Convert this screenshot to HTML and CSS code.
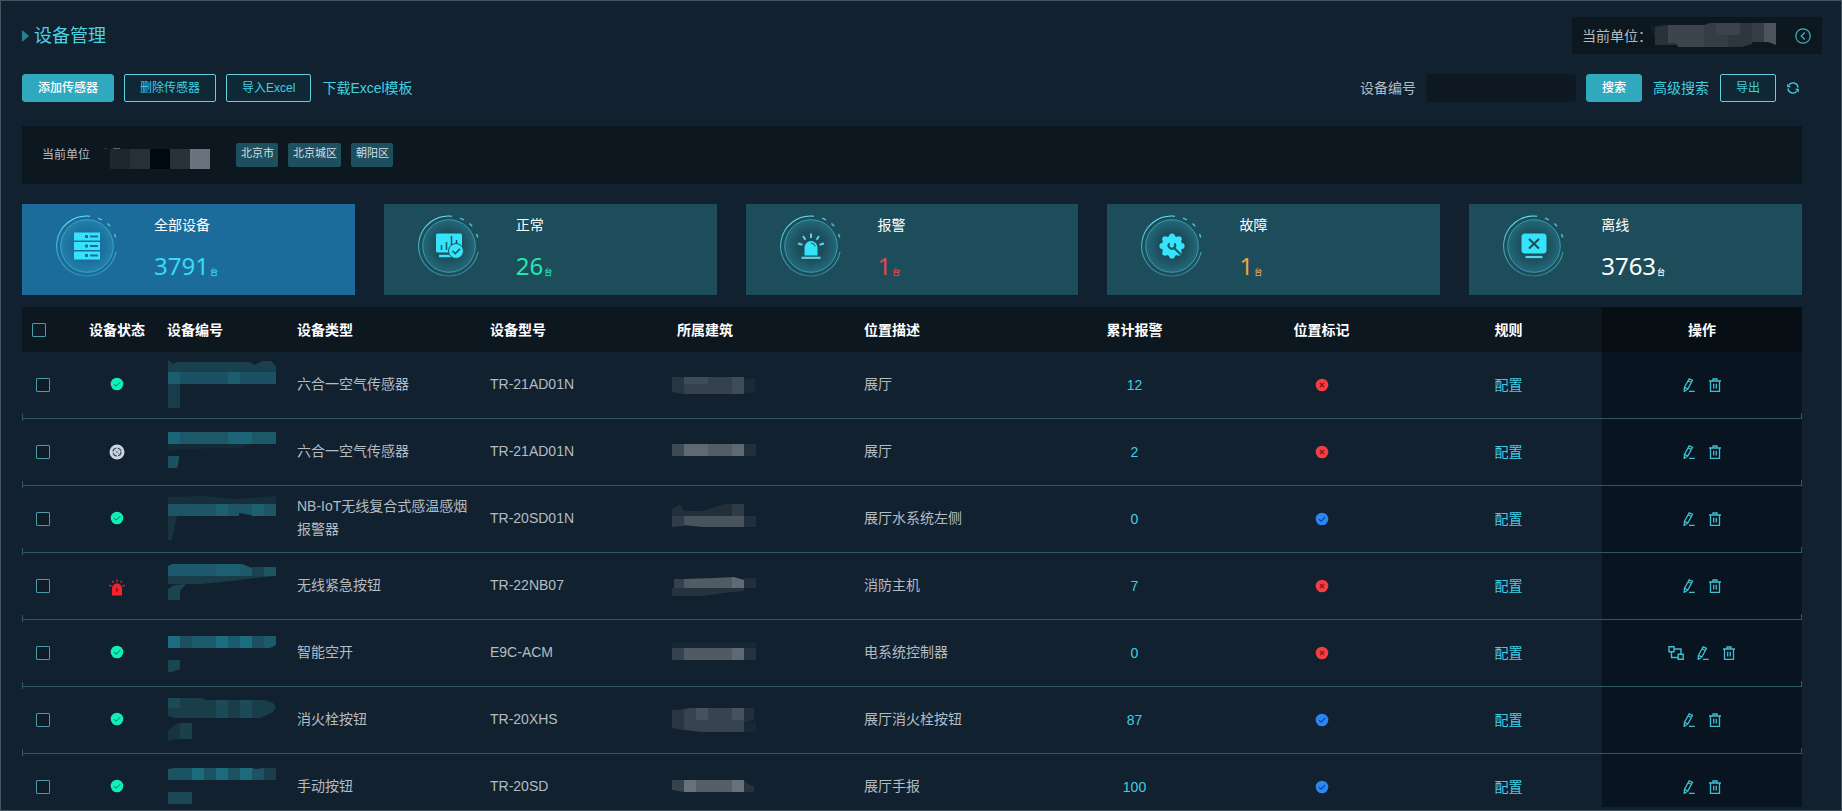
FILE: index.html
```html
<!DOCTYPE html>
<html lang="zh-CN">
<head>
<meta charset="utf-8">
<title>设备管理</title>
<link rel="stylesheet" href="styles.css">
</head>
<body>
<svg class="defs" aria-hidden="true">
  <defs>
    <radialGradient id="glow"><stop offset="0.5" stop-color="#2fb8cf" stop-opacity="0"/><stop offset="1" stop-color="#35c4dc" stop-opacity="0.24"/></radialGradient>
    <linearGradient id="arc" x1="0" y1="0" x2="0" y2="1"><stop offset="0" stop-color="#5fe6f5"/><stop offset="1" stop-color="#3fb6c6" stop-opacity="0.5"/></linearGradient>
  </defs>
  <symbol id="ring" viewBox="0 0 64 64">
    <path d="M35 2.200A30 30 0 1 0 61 38" fill="none" stroke="url(#arc)" stroke-width="1.100"/>
    <circle cx="32" cy="32" r="26.300" fill="url(#glow)" stroke="#46bccd" stroke-opacity="0.65"/>
    <path d="M43 4.200l4 1.600M52.500 9.500l2.700 2.800M59.500 20l1.300 3.500" stroke="#4fc4d4" stroke-width="1.400" fill="none"/>
  </symbol>
  <symbol id="ok" viewBox="0 0 14 14"><circle cx="7" cy="7" r="6.300" fill="#0df0b6"/><path d="M4 7.200l2.200 2 3.900-4" fill="none" stroke="#0b6a5b"/></symbol>
  <symbol id="off" viewBox="0 0 16 16"><circle cx="8" cy="8" r="7.500" fill="#ccd5e0"/><circle cx="8" cy="8" r="4" fill="none" stroke="#4a5665" stroke-width="1.300" stroke-dasharray="5 1.300"/><path d="M6.500 6.500l4 4M9.500 6.500l-3 3" stroke="#7a8593" stroke-width=".8"/></symbol>
  <symbol id="siren" viewBox="0 0 16 17"><path d="M3 16.500V9.500a5 5 0 0 1 10 0v7z" fill="#f3242c"/><path d="M8 8l-1.600 3.200h1.200L7.300 14l2.300-3.500H8.300z" fill="#6a1420"/><path d="M8 .5v2.700M3.300 1.800l1.100 2M12.700 1.800l-1.100 2M.2 6.300l2.400.8M15.800 6.300l-2.400.8" stroke="#e8242c" stroke-width="1.300"/></symbol>
  <symbol id="no" viewBox="0 0 14 14"><circle cx="7" cy="7" r="6.300" fill="#f23d42"/><path d="M5 5l4 4M9 5L5 9" stroke="#8c1019" stroke-width="1.100"/></symbol>
  <symbol id="yes" viewBox="0 0 14 14"><circle cx="7" cy="7" r="6.300" fill="#2c86f2"/><path d="M4 7.200l2.200 2 3.900-4" fill="none" stroke="#0f3f9d" stroke-width="1.200"/></symbol>
  <symbol id="edit" viewBox="0 0 14 14"><path d="M7.200.8l3.300 1.600-4.700 8.700-3.600 2.300.2-4zM6.200 2.900l3.300 1.600M2.500 9.400l3.200 1.500M7 13.400h5.700" fill="none" stroke="currentColor" stroke-width="1.300"/></symbol>
  <symbol id="trash" viewBox="0 0 14 14"><path d="M1 3h12M5 2.700V1h4v1.700M2.500 3v10.400h9V3M5.700 5.800v4.700M8.300 5.800v4.700" fill="none" stroke="currentColor" stroke-width="1.300"/></symbol>
  <symbol id="flow" viewBox="0 0 16 14"><path d="M1 .8h5v5H1zM10.200 8.300h5v5h-5zM6 3h7v5M3.500 6v5.500H10" fill="none" stroke="currentColor" stroke-width="1.400"/></symbol>
</svg>

<main class="page">
  <header class="top">
    <h1 class="title">设备管理</h1>
    <div class="unit">
      <span>当前单位：</span>
      <svg class="unit-mask" viewBox="0 0 126 28" aria-hidden="true">
        <path d="M0 4L16 2 18 22 6 20z" fill="#151f28"/>
        <path d="M5 5L18 3H36V21L28 23H5z" fill="#29323b"/>
        <path d="M18 3H54V25H28L26 21H18z" fill="#3c444d"/>
        <path d="M54 3L60 1H78V25H54z" fill="#343d46"/>
        <path d="M78 1H102V22L92 25H78z" fill="#2e3740"/>
        <path d="M66 1H90V13H66z" fill="#3b434c"/>
        <path d="M102 1H114V20H102z" fill="#343c45"/>
        <path d="M114 1H126V23L118 20H114z" fill="#4b535c"/>
      </svg>
      <button class="icon-btn collapse" aria-label="收起"><svg viewBox="0 0 16 16"><circle cx="8" cy="8" r="7.200"/><path d="M9.800 4.500L6.200 8l3.600 3.500"/></svg></button>
    </div>
  </header>

  <section class="toolbar">
    <button class="btn primary">添加传感器</button>
    <button class="btn">删除传感器</button>
    <button class="btn">导入Excel</button>
    <a class="link" href="#">下载Excel模板</a>
    <div class="search">
      <label for="code">设备编号</label>
      <input id="code" class="field" type="text">
      <button class="btn primary">搜索</button>
      <a class="link" href="#">高级搜索</a>
      <button class="btn">导出</button>
      <button class="icon-btn refresh" aria-label="刷新"><svg viewBox="0 0 14 14"><path d="M3.200 3.700A5 5 0 0 1 12 6.500M10.800 10.300A5 5 0 0 1 2 7.500"/><path d="M1.200 2.500v3.700h3.700zM12.800 11.500V7.800H9.100z" class="tip"/></svg></button>
    </div>
  </section>

  <section class="filter">
    <span>当前单位</span>
    <svg class="filter-mask" viewBox="0 0 106 24" aria-hidden="true">
      <path d="M1 1h1v1H1zM9 1h7v1H9z" fill="#59626a"/>
      <path d="M6 2h20v20H6z" fill="#1e2630"/><path d="M26 2h20v20H26z" fill="#272f39"/><path d="M46 2h20v20H46z" fill="#000912"/><path d="M66 2h20v20H66z" fill="#29323a"/><path d="M86 2h20v20H86z" fill="#69737d"/>
    </svg>
    <ul class="tags"><li>北京市</li><li>北京城区</li><li>朝阳区</li></ul>
  </section>

  <section class="cards">
    <article class="card active">
      <svg class="badge" viewBox="0 0 64 64"><use href="#ring"/><path fill="#35e4fb" fill-rule="evenodd" d="M19 18.500h26v8H19zM30 21v3h3v-3zM35 21.500v2h8v-2zM19 28h26v8H19zM30 30.500v3h3v-3zM35 31v2h8v-2zM19 37.500h26v8H19zM30 40v3h3v-3zM35 40.500v2h8v-2z"/></svg>
      <div><h2>全部设备</h2><p class="num cyan">3791<small>台</small></p></div>
    </article>
    <article class="card">
      <svg class="badge" viewBox="0 0 64 64"><use href="#ring"/><rect x="19" y="19.500" width="26" height="19" rx="1.500" fill="#35e4fb"/><path d="M24.500 31v5M29.500 28v8M34.500 22v14M39.500 26v8" stroke="#1b5664" stroke-width="1.500"/><path d="M22 42h12" stroke="#35e4fb" stroke-width="2.500"/><circle cx="39" cy="37" r="7.500" fill="#35e4fb" stroke="#1b5664"/><path d="M35.500 37l2.800 2.700 4.700-4.900" fill="none" stroke="#1b5664" stroke-width="1.600"/></svg>
      <div><h2>正常</h2><p class="num green">26<small>台</small></p></div>
    </article>
    <article class="card">
      <svg class="badge" viewBox="0 0 64 64"><use href="#ring"/><path d="M25.500 41.500v-8a6.500 6.500 0 0 1 13 0v8z" fill="#35e4fb"/><path d="M32 29a4.500 4.500 0 0 1 4.200 3.500" fill="none" stroke="#1b5664"/><path d="M22.500 43.800h19" stroke="#58d4e6" stroke-width="2.200"/><path d="M32 19.500v4.500M24 22l2.500 3.800M40 22l-2.500 3.800M19 29.500l4.500 1.200M45 29.500l-4.500 1.200" stroke="#58d4e6" stroke-width="2"/></svg>
      <div><h2>报警</h2><p class="num red">1<small>台</small></p></div>
    </article>
    <article class="card">
      <svg class="badge" viewBox="0 0 64 64"><use href="#ring"/><g fill="#35e4fb"><circle cx="32" cy="32" r="10.300"/><circle cx="32" cy="22.300" r="2.900"/><circle cx="38.900" cy="25.100" r="2.900"/><circle cx="41.700" cy="32" r="2.900"/><circle cx="38.900" cy="38.900" r="2.900"/><circle cx="32" cy="41.700" r="2.900"/><circle cx="25.100" cy="38.900" r="2.900"/><circle cx="22.300" cy="32" r="2.900"/><circle cx="25.100" cy="25.100" r="2.900"/></g><path d="M33.500 33.500L42 41.500" stroke="#1b5664" stroke-width="2.200"/><path d="M29.400 29.300a3.300 3.300 0 1 0 5 0" fill="none" stroke="#1b5664" stroke-width="2"/></svg>
      <div><h2>故障</h2><p class="num orange">1<small>台</small></p></div>
    </article>
    <article class="card">
      <svg class="badge" viewBox="0 0 64 64"><use href="#ring"/><rect x="19.500" y="19.500" width="25" height="20" rx="3.500" fill="#35e4fb"/><path d="M27 25l10 9.500M37 25l-10 9.500" stroke="#1b4f5d" stroke-width="2.200"/><path d="M23.500 43h17" stroke="#58d4e6" stroke-width="2.200"/></svg>
      <div><h2>离线</h2><p class="num white">3763<small>台</small></p></div>
    </article>
  </section>

  <section class="table-wrap">
    <table class="grid">
      <colgroup><col class="c-check"><col class="c-status"><col class="c-code"><col class="c-type"><col><col><col><col><col><col><col class="c-act"></colgroup>
      <thead>
        <tr><th class="check"><input type="checkbox" aria-label="全选"></th><th class="mid">设备状态</th><th>设备编号</th><th>设备类型</th><th>设备型号</th><th>所属建筑</th><th>位置描述</th><th class="mid">累计报警</th><th class="mid">位置标记</th><th class="mid">规则</th><th class="mid act">操作</th></tr>
      </thead>
      <tbody>
        <tr>
          <td class="check"><input type="checkbox" aria-label="选择第1行"></td>
          <td class="mid status"><svg class="dot"><use href="#ok"/></svg></td>
          <td class="code"><svg class="code-mask" viewBox="0 0 110 60"><path d="M1 5l5 4 4-2h73l4 3 9-4h8l5 5v6H1z" fill="#1a404e"/><path d="M1 17h108v12H1z" fill="#1b5163"/><path d="M61 17h12v12H61zM1 17h12v12H1z" fill="#1c5d6f"/><path d="M1 29h12v24H1z" fill="#183c49"/></svg></td>
          <td class="text">六合一空气传感器</td><td class="text">TR-21AD01N</td>
          <td class="place"><svg class="place-mask" viewBox="0 0 84 60"><path d="M0 22h12v17L0 37z" fill="#283643"/><path d="M12 22h60v17H12z" fill="#35424e"/><path d="M12 22h24v7H12zM60 22h12v17H60z" fill="#404d59"/><path d="M72 24l11-1v14l-11 1z" fill="#1c2a38"/></svg></td>
          <td class="text">展厅</td><td class="mid"><a href="#">12</a></td><td class="mid"><svg class="dot"><use href="#no"/></svg></td><td class="mid"><a href="#">配置</a></td>
          <td class="act"><div class="ops"><button class="op" aria-label="编辑"><svg><use href="#edit"/></svg></button><button class="op" aria-label="删除"><svg><use href="#trash"/></svg></button></div></td>
        </tr>
        <tr>
          <td class="check"><input type="checkbox" aria-label="选择第2行"></td>
          <td class="mid"><svg class="dot big"><use href="#off"/></svg></td>
          <td class="code"><svg class="code-mask" viewBox="0 0 110 60"><path d="M1 10h108v12H1z" fill="#1d5868"/><path d="M1 10h12v12H1zM61 10h24v12H61z" fill="#1c6578"/><path d="M1 22h83l-10 4-60 1-13 3z" fill="#152a37"/><path d="M1 34h11v4l-2 8H1z" fill="#1c5260"/></svg></td>
          <td class="text">六合一空气传感器</td><td class="text">TR-21AD01N</td>
          <td class="place"><svg class="place-mask" viewBox="0 0 84 60"><path d="M0 22h12v12H0z" fill="#3d4a56"/><path d="M12 22h60v12H12z" fill="#525d68"/><path d="M12 22h24v12H12zM60 22h12v12H60z" fill="#5f6973"/><path d="M72 22h12v12H72z" fill="#222f3d"/></svg></td>
          <td class="text">展厅</td><td class="mid"><a href="#">2</a></td><td class="mid"><svg class="dot"><use href="#no"/></svg></td><td class="mid"><a href="#">配置</a></td>
          <td class="act"><div class="ops"><button class="op" aria-label="编辑"><svg><use href="#edit"/></svg></button><button class="op" aria-label="删除"><svg><use href="#trash"/></svg></button></div></td>
        </tr>
        <tr>
          <td class="check"><input type="checkbox" aria-label="选择第3行"></td>
          <td class="mid status"><svg class="dot"><use href="#ok"/></svg></td>
          <td class="code"><svg class="code-mask" viewBox="0 0 110 60"><path d="M1 8l37-1 30 3 41-3v8H1z" fill="#172f3c"/><path d="M1 15h108v12H89l-17-3v3H1z" fill="#1d5565"/><path d="M49 15h12v12H49zM85 15h12v12H85z" fill="#1d6070"/><path d="M1 27h9L5 51H1z" fill="#18333f"/></svg></td>
          <td class="text">NB-IoT无线复合式感温感烟报警器</td><td class="text">TR-20SD01N</td>
          <td class="place"><svg class="place-mask" viewBox="0 0 84 60"><path d="M0 20l8-5 4 7h18l22-7h20v12H0z" fill="#222e3a"/><path d="M60 15h12v12H60z" fill="#2f3b47"/><path d="M0 27h12v10L0 38z" fill="#303d49"/><path d="M12 27h60v11H30l-18-2z" fill="#48535e"/><path d="M72 27h12v11H72z" fill="#212e3b"/></svg></td>
          <td class="text">展厅水系统左侧</td><td class="mid"><a href="#">0</a></td><td class="mid"><svg class="dot"><use href="#yes"/></svg></td><td class="mid"><a href="#">配置</a></td>
          <td class="act"><div class="ops"><button class="op" aria-label="编辑"><svg><use href="#edit"/></svg></button><button class="op" aria-label="删除"><svg><use href="#trash"/></svg></button></div></td>
        </tr>
        <tr>
          <td class="check"><input type="checkbox" aria-label="选择第4行"></td>
          <td class="mid siren-cell"><svg class="dot siren"><use href="#siren"/></svg></td>
          <td class="code"><svg class="code-mask" viewBox="0 0 110 60"><path d="M1 10l4-2h70l10 4v8H1z" fill="#1d596b"/><path d="M49 8h24v12H49z" fill="#1c6072"/><path d="M85 11h24v9H85z" fill="#1a4250"/><path d="M97 11h12v9H97z" fill="#1d5362"/><path d="M1 20h107l-20 2-24 3-30 3H1z" fill="#193c49"/><path d="M1 33l6-4 12-1-6 7v9H1z" fill="#1a4450"/></svg></td>
          <td class="text">无线紧急按钮</td><td class="text">TR-22NB07</td>
          <td class="place"><svg class="place-mask" viewBox="0 0 84 60"><path d="M2 23h10v9H2z" fill="#34414d"/><path d="M12 23l30-1 20-1 10 3v8H12z" fill="#505b66"/><path d="M60 21l12 3v8H60z" fill="#606a74"/><path d="M0 32h72v3l-20 2-22 3H0z" fill="#26333f"/><path d="M72 22h12v10H72z" fill="#222f3b"/></svg></td>
          <td class="text">消防主机</td><td class="mid"><a href="#">7</a></td><td class="mid"><svg class="dot"><use href="#no"/></svg></td><td class="mid"><a href="#">配置</a></td>
          <td class="act"><div class="ops"><button class="op" aria-label="编辑"><svg><use href="#edit"/></svg></button><button class="op" aria-label="删除"><svg><use href="#trash"/></svg></button></div></td>
        </tr>
        <tr>
          <td class="check"><input type="checkbox" aria-label="选择第5行"></td>
          <td class="mid status"><svg class="dot"><use href="#ok"/></svg></td>
          <td class="code"><svg class="code-mask" viewBox="0 0 110 60"><path d="M1 13h108v9l-6 3H1z" fill="#1c5b6b"/><path d="M1 13h12v12H1zM49 13h12v12H49zM73 13h12v12H73z" fill="#1b6e7f"/><path d="M13 13h12v12H13zM85 13h12v12H85z" fill="#1c505f"/><path d="M1 37h12v9l-8 3H1z" fill="#1a4551"/></svg></td>
          <td class="text">智能空开</td><td class="text">E9C-ACM</td>
          <td class="place"><svg class="place-mask" viewBox="0 0 84 60"><path d="M0 19h84v6H0z" fill="#182734"/><path d="M0 25h12v12H0z" fill="#35424e"/><path d="M12 25h60v12H12z" fill="#505a65"/><path d="M60 25h12v12H60z" fill="#5f6973"/><path d="M72 25h12v12H72z" fill="#253240"/></svg></td>
          <td class="text">电系统控制器</td><td class="mid"><a href="#">0</a></td><td class="mid"><svg class="dot"><use href="#no"/></svg></td><td class="mid"><a href="#">配置</a></td>
          <td class="act"><div class="ops"><button class="op" aria-label="回路"><svg class="wide"><use href="#flow"/></svg></button><button class="op" aria-label="编辑"><svg><use href="#edit"/></svg></button><button class="op" aria-label="删除"><svg><use href="#trash"/></svg></button></div></td>
        </tr>
        <tr>
          <td class="check"><input type="checkbox" aria-label="选择第6行"></td>
          <td class="mid status"><svg class="dot"><use href="#ok"/></svg></td>
          <td class="code"><svg class="code-mask" viewBox="0 0 110 60"><path d="M1 8h34l3 2h60l8 3 3 4-3 5-13 6H8l-7-2z" fill="#1a3d4a"/><path d="M1 8h12v10H1zM49 10h12v18H49zM73 10h12v18H73z" fill="#1b4b59"/><path d="M1 40l10-7h14v16H11l-10 2z" fill="#19343f"/><path d="M13 33h12v16H13z" fill="#1a404b"/></svg></td>
          <td class="text">消火栓按钮</td><td class="text">TR-20XHS</td>
          <td class="place"><svg class="place-mask" viewBox="0 0 84 60"><path d="M0 20l12-1v21L0 38z" fill="#293642"/><path d="M12 19l6-1h54v24H30l-18-2z" fill="#37434f"/><path d="M24 18h12v12H24zM60 18h12v12H60z" fill="#47525d"/><path d="M72 18h10v12l-10 3z" fill="#212e3b"/><path d="M72 34l12-3v11H72z" fill="#1a2835"/></svg></td>
          <td class="text">展厅消火栓按钮</td><td class="mid"><a href="#">87</a></td><td class="mid"><svg class="dot"><use href="#yes"/></svg></td><td class="mid"><a href="#">配置</a></td>
          <td class="act"><div class="ops"><button class="op" aria-label="编辑"><svg><use href="#edit"/></svg></button><button class="op" aria-label="删除"><svg><use href="#trash"/></svg></button></div></td>
        </tr>
        <tr>
          <td class="check"><input type="checkbox" aria-label="选择第7行"></td>
          <td class="mid status"><svg class="dot"><use href="#ok"/></svg></td>
          <td class="code"><svg class="code-mask" viewBox="0 0 110 60"><path d="M1 12l6-1h78l4 1 8-1h12v12H1z" fill="#1c5363"/><path d="M25 11h12v12H25zM49 11h12v12H49zM73 11h12v12H73z" fill="#1c6b7b"/><path d="M97 11h12v12H97z" fill="#1a3e4c"/><path d="M1 35h24v12H1z" fill="#1b4855"/></svg></td>
          <td class="text">手动按钮</td><td class="text">TR-20SD</td>
          <td class="place"><svg class="place-mask" viewBox="0 0 84 60"><path d="M0 23h12v12L0 33z" fill="#36424e"/><path d="M12 23h60v12H12z" fill="#565f69"/><path d="M12 23h12v12H12zM60 23h12v12H60z" fill="#66717b"/><path d="M72 23l6 5 4 1v6H72z" fill="#26323f"/></svg></td>
          <td class="text">展厅手报</td><td class="mid"><a href="#">100</a></td><td class="mid"><svg class="dot"><use href="#yes"/></svg></td><td class="mid"><a href="#">配置</a></td>
          <td class="act"><div class="ops"><button class="op" aria-label="编辑"><svg><use href="#edit"/></svg></button><button class="op" aria-label="删除"><svg><use href="#trash"/></svg></button></div></td>
        </tr>
      </tbody>
    </table>
  </section>
</main>
</body>
</html>
```

FILE: styles.css
```css
* { box-sizing: border-box; }
body {
  margin: 0;
  background: #12212f;
  color: #b4bcc3;
  font: 14px/20px "Liberation Sans", "Noto Sans CJK SC", sans-serif;
}
h1, h2, p, ul { margin: 0; padding: 0; font-weight: 400; }
a { color: #41cfe0; text-decoration: none; }
button { font-family: inherit; cursor: pointer; }
.defs { position: absolute; width: 0; height: 0; }

.page {
  display: flex;
  flex-direction: column;
  height: 100vh;
  padding: 16px 39px 3px 21px;
  border: 1px solid #44545f;
  overflow: hidden;
}

.top {
  display: flex;
  align-items: center;
  justify-content: space-between;
  margin-right: -20px;
}
.title {
  display: flex;
  align-items: center;
  gap: 5px;
  color: #4bd3e5;
  font-size: 18px;
  line-height: 24px;
}
.title::before {
  content: "";
  border: 6px solid transparent;
  border-left: 7px solid #28808f;
  border-right: 0;
}
.unit {
  display: flex;
  align-items: center;
  width: 250px;
  height: 37px;
  padding: 0 10px;
  background: #0d1720;
}
.unit-mask { width: 126px; height: 28px; margin: 0 auto 0 -2px; }
.icon-btn { padding: 0; border: 0; background: none; color: #41b4c5; }
.icon-btn svg { display: block; fill: none; stroke: currentColor; stroke-width: 1.2; }
.collapse svg { width: 18px; height: 16px; }
.refresh { color: #41cfe0; }
.refresh svg { width: 14px; height: 14px; stroke-width: 1.4; }
.refresh .tip { fill: currentColor; stroke: none; }

.toolbar { display: flex; align-items: center; gap: 10px; margin-top: 20px; }
.search { display: flex; align-items: center; gap: 10px; margin-left: auto; padding-right: 2px; }
.btn {
  height: 28px;
  padding: 0 15px;
  border: 1px solid #66cfdd;
  border-radius: 2px;
  background: #0e2836;
  color: #41cfe0;
  font-size: 12px;
  line-height: 26px;
}
.btn.primary { border-color: #30a9bf; border-radius: 3px; background: #30a9bf; color: #fff; font-weight: 500; }
.link { padding: 0 1px; }
.field {
  width: 150px;
  height: 28px;
  border: 0;
  border-radius: 4px;
  background: #0e1923;
  color: #b4bcc3;
}

.filter {
  display: flex;
  align-items: center;
  flex: none;
  height: 58px;
  margin-top: 24px;
  padding: 0 20px;
  background: #0d1720;
  font-size: 12px;
}
.filter-mask { width: 106px; height: 24px; margin: 8px 26px 0 14px; }
.tags { display: flex; gap: 10px; list-style: none; }
.tags li {
  height: 24px;
  padding: 0 4px 4px 5px;
  border-radius: 2px;
  background: #1d505f;
  color: #d3dee2;
  font-size: 11px;
}

.cards { display: flex; gap: 29px; margin-top: 20px; }
.card {
  display: flex;
  flex: 1;
  height: 91px;
  padding: 10px 0 0 33px;
  gap: 35px;
  background: #1d4d5b;
}
.card.active { background: #1c6c9b; }
.badge { width: 64px; height: 64px; }
.card h2 { color: #fff; font-size: 14px; line-height: 22px; }
.num { margin-top: 12px; font: 24px/36px "Noto Sans", sans-serif; }
.num small { margin-left: 1px; font: 500 8px "Noto Sans CJK SC", sans-serif; }
.cyan { color: #35dcf3; }
.green { color: #22e6ae; }
.red { color: #e84650; }
.orange { color: #eba54c; }
.white { color: #fff; }

.table-wrap { flex: 1; min-height: 0; margin-top: 12px; overflow: hidden; }
.grid { width: 100%; border-spacing: 0; table-layout: fixed; }
.c-check { width: 55px; }
.c-status { width: 80px; }
.c-code { width: 130px; }
.c-type { width: 193px; }
.c-act { width: 200px; }
.grid th {
  height: 45px;
  padding: 0 10px;
  background: #0d1720;
  color: #fff;
  text-align: left;
}
.grid th.act { background: #070f15; }
.grid td {
  position: relative;
  height: 67px;
  padding: 0 10px;
  border-bottom: 1px solid #2c5963;
  line-height: 23px;
}
.grid td.act { background: #081520; }
.grid .mid { text-align: center; }
.grid td.check { padding-left: 14px; }
.grid td.code { padding: 0 0 0 10px; }
.grid td.place { padding: 0 5px; }
.grid td.text, .grid td.status { padding-bottom: 2px; }
.grid td.siren-cell { padding-top: 2px; }
.grid td.check::before, .grid td.act::before {
  content: "";
  position: absolute;
  bottom: -3px;
  left: 0;
  width: 1px;
  height: 7px;
  background: #2c5963;
}
.grid td.act::before { right: 0; bottom: 0; left: auto; height: 5px; }
.grid svg { display: block; }
.code-mask { width: 110px; height: 60px; }
.place-mask { width: 84px; height: 60px; }
.dot { width: 14px; height: 14px; margin: 0 auto; }
.dot.big { width: 16px; height: 16px; }
.dot.siren { width: 16px; height: 17px; }
.ops { display: flex; justify-content: center; gap: 12px; }
.op { padding: 0; border: 0; background: none; color: #41bfcf; }
.op svg { width: 14px; height: 14px; }
.op svg.wide { width: 16px; }

input[type="checkbox"] {
  display: block;
  width: 14px;
  height: 14px;
  margin: 0;
  border: 1px solid #4a9cab;
  border-radius: 1px;
  background: #0f1c28;
  appearance: none;
}
```
